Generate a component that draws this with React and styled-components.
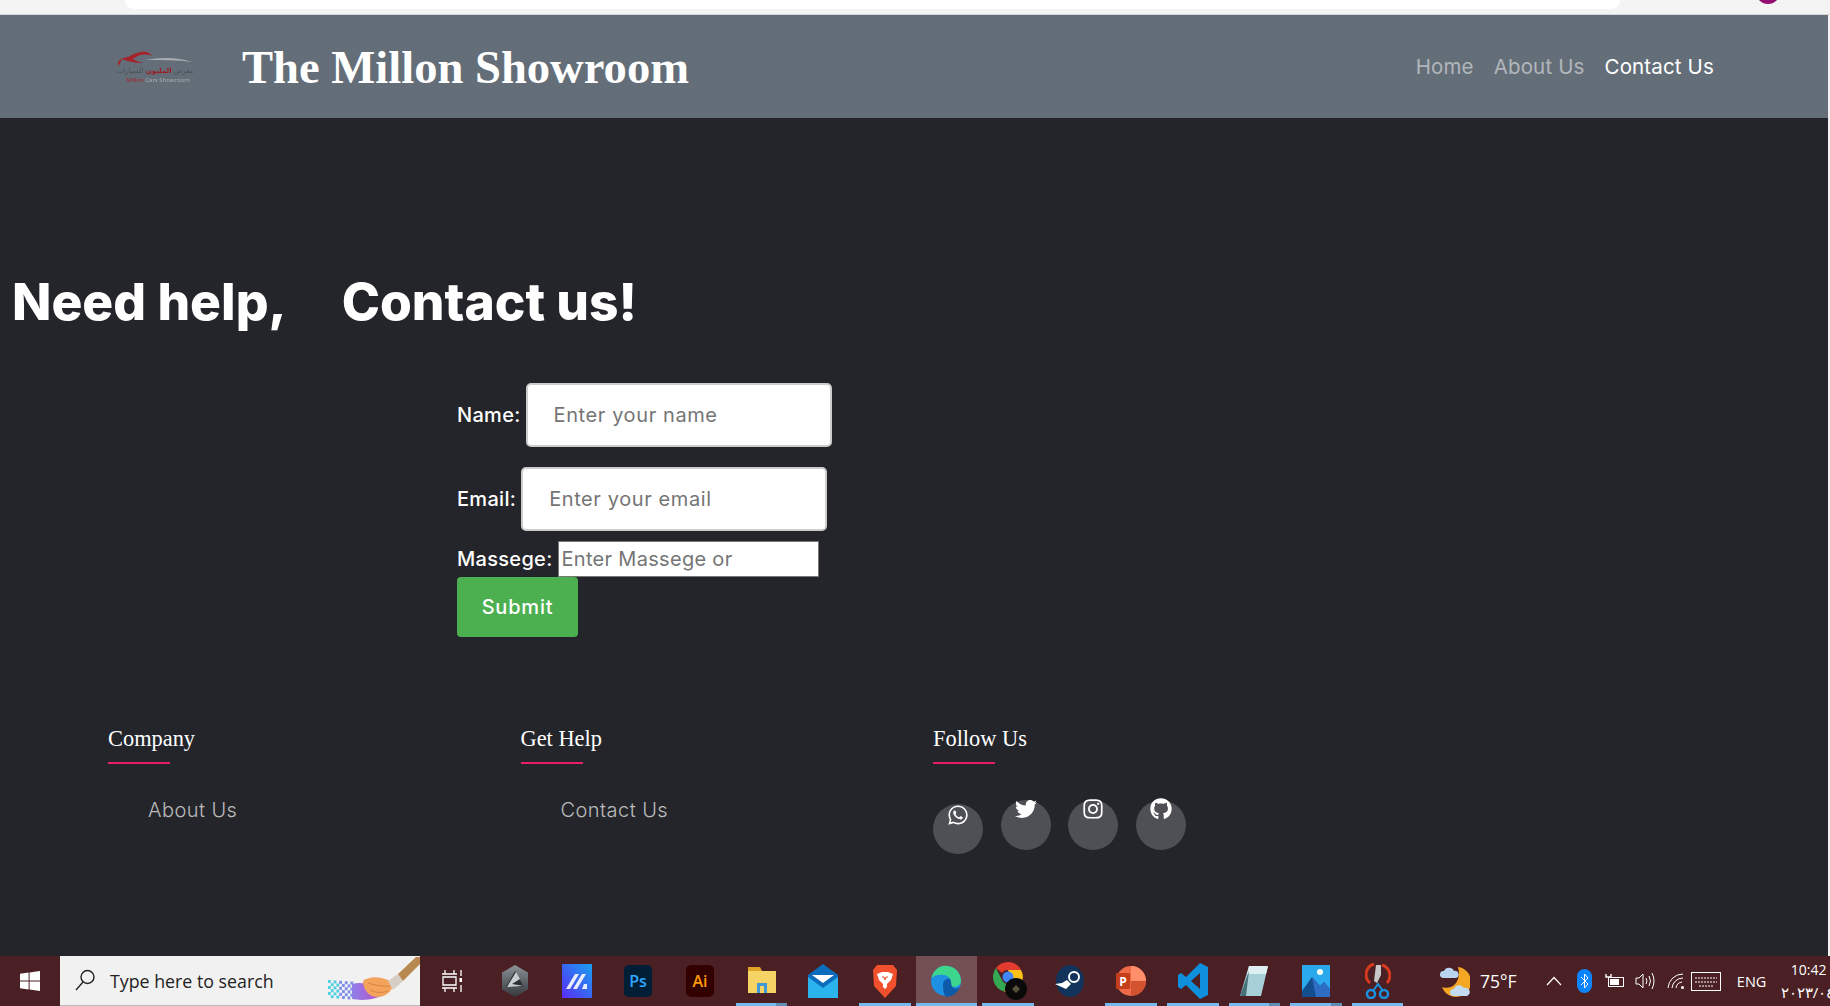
import React from 'react';
import styled, {createGlobalStyle} from 'styled-components';
import {FaWhatsapp, FaTwitter, FaInstagram, FaGithub} from 'react-icons/fa';

const Global = createGlobalStyle`
  * { box-sizing: border-box; }
  html, body { margin: 0; padding: 0; }
  body { font-family: Inter, "Liberation Sans", sans-serif; background: #f3f3f3; overflow: hidden; }
`;

const Page = styled.div`
  width: 1830px;
  height: 1006px;
  display: flex;
  flex-direction: column;
  overflow: hidden;
`;

const BrowserStrip = styled.div`
  height: 15px;
  flex: none;
  display: flex;
  align-items: flex-start;
  padding-left: 125px;
  background: #f4f4f4;
  border-bottom: 1px solid #d8d8d8;
`;
const AddressBar = styled.div`
  width: 1495px;
  height: 9px;
  background: #fff;
  border-radius: 0 0 16px 16px;
`;
const Avatar = styled.div`
  width: 24px;
  height: 24px;
  margin: -20px 0 0 136px;
  border-radius: 50%;
  background: radial-gradient(circle at 50% 80%, #a0107a, #5a0a50);
`;

const Site = styled.div`
  flex: 1;
  min-height: 0;
  display: flex;
  flex-direction: column;
  margin-right: 2px;
  background: #24252b;
`;

const Navbar = styled.header`
  height: 103px;
  flex: none;
  display: flex;
  align-items: center;
  background: #646e78;
  padding: 0 114px 0 116px;
`;
const Logo = styled.svg`
  width: 78px;
  height: 36px;
  flex: none;
  filter: blur(.35px);
`;
const Brand = styled.h1`
  margin: 0 0 0 48px;
  flex: 1;
  font-family: "Liberation Serif", serif;
  font-size: 46.6px;
  font-weight: 700;
  color: #fff;
`;
const NavLinks = styled.nav`
  display: flex;
  gap: 20px;
`;
const NavLink = styled.a`
  font-size: 20.5px;
  letter-spacing: .15px;
  color: ${p => (p.$active ? '#fff' : 'rgba(255,255,255,.5)')};
`;

const Heading = styled.h2`
  margin: 153px 0 0 12px;
  display: flex;
  gap: 55px;
  font-size: 51.5px;
  line-height: 60px;
  font-weight: 800;
  color: #fff;
`;

const Form = styled.form`
  margin: 52px 0 0 457px;
  display: flex;
  flex-direction: column;
  align-items: flex-start;
`;
const Row = styled.div`
  display: flex;
  align-items: center;
  gap: 5px;
  margin-bottom: ${p => p.$gap || 0}px;
`;
const Label = styled.label`
  font-size: 20px;
  letter-spacing: .3px;
  font-weight: 500;
  color: #fff;
`;
const TextInput = styled.input`
  width: 306px;
  height: 64px;
  padding: 0 26px;
  border: 2px solid #ccc;
  border-radius: 5px;
  background: #fff;
  font: 400 20px Inter, sans-serif;
  letter-spacing: .6px;
  outline: none;
  &::placeholder { color: #757575; }
`;
const MessageBox = styled.textarea`
  width: 261px;
  height: 36px;
  padding: 5px 3px;
  border: 1px solid #767676;
  background: #fff;
  font: 400 20px/24px Inter, sans-serif;
  letter-spacing: .3px;
  resize: none;
  overflow: hidden;
  outline: none;
  &::placeholder { color: #757575; }
`;
const Submit = styled.button`
  width: 121px;
  height: 60px;
  border: none;
  border-radius: 4px;
  background: #4caf50;
  color: #fff;
  font: 500 20px Inter, sans-serif;
  letter-spacing: .8px;
`;

const Footer = styled.footer`
  margin: 86px 0 0 108px;
  display: flex;
`;
const FooterCol = styled.div`
  width: 412.5px;
`;
const FooterTitle = styled.h4`
  margin: 0;
  font-family: "Liberation Serif", serif;
  font-size: 22.4px;
  line-height: 32px;
  font-weight: 400;
  color: #fff;
  &::after {
    content: '';
    display: block;
    width: 62px;
    height: 2px;
    margin-top: 7px;
    background: #e91e63;
  }
`;
const FooterLink = styled.a`
  display: block;
  margin: 31px 0 0 40px;
  font-size: 20px;
  line-height: 30px;
  font-weight: 300;
  letter-spacing: .45px;
  color: #bbb;
`;
const Socials = styled.div`
  display: flex;
  gap: 17.5px;
  margin-top: 36px;
  align-items: flex-start;
`;
const Social = styled.a`
  width: 50px;
  height: 50px;
  margin-top: ${p => (p.$low ? 4 : 0)}px;
  display: flex;
  justify-content: center;
  border-radius: 50%;
  background: rgba(255,255,255,.2);
  color: #fff;
  font-size: 22px;
  svg { margin-top: ${p => (p.$low ? 0 : -2)}px; }
`;

const Taskbar = styled.div`
  height: 50px;
  flex: none;
  display: flex;
  align-items: stretch;
  background: #4a2024;
  svg { flex: none; }
`;
const StartButton = styled.div`
  flex: none;
  width: 60px;
  display: flex;
  align-items: center;
  justify-content: center;
`;
const SearchBox = styled.div`
  flex: none;
  width: 360px;
  display: flex;
  align-items: center;
  padding-left: 15px;
  gap: 15px;
  background: #f1f1f1;
  border-bottom: 1px solid #bbb;
  font-family: "Open Sans", sans-serif;
  font-size: 17.8px;
  color: #222;
`;
const SearchText = styled.span`
  flex: 1;
  white-space: nowrap;
`;
const TaskView = styled.div`
  flex: none;
  width: 64.5px;
  display: flex;
  align-items: center;
  justify-content: center;
`;
const AppSlot = styled.div`
  position: relative;
  flex: none;
  width: 61.6px;
  display: flex;
  align-items: center;
  justify-content: center;
  background: ${p => (p.$focused ? '#744f53' : 'transparent')};
  ${p => p.$running && `
    &::after {
      content: '';
      position: absolute;
      bottom: 0;
      left: ${p.$focused ? 0 : 5}px;
      right: ${p.$focused ? 0 : 5}px;
      height: 3px;
      background: ${p.$stacked ? 'linear-gradient(90deg, #76b9ed 78%, #5f8db4 78%)' : '#76b9ed'};
    }
  `}
`;
const Tray = styled.div`
  flex: 1;
  min-width: 0;
  display: flex;
  align-items: center;
  padding-left: 31.5px;
  color: #fff;
  font-family: "Open Sans", sans-serif;
  white-space: nowrap;
  overflow: hidden;
`;
const TrayTemp = styled.span`
  flex: none;
  width: 69px;
  padding-left: 10px;
  font-size: 17.5px;
`;
const TrayIcons = styled.div`
  flex: none;
  display: flex;
  align-items: center;
`;
const TrayIcon = styled.span`
  width: 30.4px;
  display: flex;
  justify-content: center;
`;
const Lang = styled.span`
  flex: none;
  width: 44px;
  margin-left: 15.6px;
  font-size: 14.5px;
`;
const Clock = styled.div`
  flex: none;
  font-size: 14px;
  line-height: 23px;
`;
const ClockTime = styled.div`
  padding-left: 10px;
`;
const ClockDate = styled.div`
  font-size: 15px;
`;

const Win = () => (
    <svg width="20" height="20" viewBox="0 0 20 20" fill="#fff">
        <path d="M0 2.8 8.6 1.5V9.4H0zM9.6 1.4 20 0V9.4H9.6zM0 10.4H8.6V18.4L0 17.2zM9.6 10.4H20V20L9.6 18.6z"/>
    </svg>
);
const SearchGlass = () => (
    <svg width="20" height="24" viewBox="0 0 20 24" fill="none" stroke="#222" strokeWidth="1.4">
        <circle cx="12.5" cy="8" r="6.5"/>
        <path d="M8 13 1 21"/>
    </svg>
);

const stipple = [];
for (let col = 0; col < 9; col++) {
    for (let row = 0; row < 6; row++) {
        if ((col + row) % 2 === 0) {
            stipple.push({x: col * 2.8, y: 23 + row * 3 + col * .2, color: col < 4 ? '#4fd0e0' : '#7d8fe8'});
        }
    }
}

const Brush = () => (
    <svg width="92" height="48" viewBox="0 0 92 48">
        <defs>
            <linearGradient id="brushStroke" x1="0" y1="0" x2="1" y2="0">
                <stop offset="0" stopColor="#8f7fe8"/>
                <stop offset="1" stopColor="#c445c8"/>
            </linearGradient>
        </defs>
        {stipple.map(dot => (
            <rect key={`${dot.x}-${dot.y}`} x={dot.x} y={dot.y} width="2.8" height="3" fill={dot.color}/>
        ))}
        <path d="M24 27C32 25 38 26 44 30L60 35C50 43 34 44 24 42z" fill="url(#brushStroke)"/>
        <path d="M35 24C42 18 54 20 62 24L64 31C60 40 48 42 42 38 38 35 35 30 35 24z" fill="#f4a35c"/>
        <path d="M40 26C46 28 54 30 62 29M42 33C48 36 54 36 60 34" fill="none" stroke="#c97a35" strokeWidth=".7"/>
        <path d="M60 24 70 17 75 24 65 33z" fill="#d8cfc4"/>
        <path d="M70 17 88 0H92V7L75 24z" fill="#b8894f"/>
    </svg>
);
const TaskViewIcon = () => (
    <svg width="20" height="24" viewBox="0 0 20 24" fill="none" stroke="#fff" strokeWidth="1.3">
        <path d="M0 5H15M3 1V5M12 1V5M0 19H15M3 19V23M12 19V23M1 8H14V16H1z"/>
        <path d="M19 1V7M19 16V23"/>
        <rect x="17.500" y="9" width="3" height="4" fill="#fff" stroke="none"/>
    </svg>
);
const AppIcon = ({kind}) => {
    switch (kind) {
        case 'hex':
            return <svg width="28" height="32" viewBox="0 0 28 32">
                <defs><linearGradient id="hexFill" x1="0" y1="0" x2="0" y2="1"><stop offset="0" stopColor="#8b9298"/><stop offset="1" stopColor="#34383c"/></linearGradient></defs>
                <path d="M14 0 27 7.500V24.500L14 32 1 24.500V7.500z" fill="url(#hexFill)"/>
                <path d="M14 6 23 22H5z" fill="#2b2f33"/>
                <path d="M15 7 19 14 11 19 23 21 6 22z" fill="#c8cdd2"/>
            </svg>;
        case 'marvel':
            return <svg width="30" height="34" viewBox="0 0 30 34">
                <defs><linearGradient id="marvelFill" x1="1" y1="0" x2="0" y2="1"><stop offset="0" stopColor="#18a0f0"/><stop offset="1" stopColor="#5a2cf5"/></linearGradient></defs>
                <rect width="30" height="34" fill="url(#marvelFill)"/>
                <path d="M4 25 13 10h4L8 25zM11 25 20 10h4L15 25zM20 25 22 20h3v5z" fill="#e8ecff"/>
            </svg>;
        case 'ps':
        case 'ai': {
            const ps = kind === 'ps';
            return <svg width="28" height="32" viewBox="0 0 28 32">
                <rect width="28" height="32" rx="5" fill={ps ? '#001e36' : '#330000'}/>
                <text x="14" y="22" textAnchor="middle" fontFamily="Open Sans" fontWeight="600" fontSize="16" fill={ps ? '#31a8ff' : '#ff9a00'}>{ps ? 'Ps' : 'Ai'}</text>
            </svg>;
        }
        case 'folder':
            return <svg width="28" height="28" viewBox="0 0 28 28">
                <path d="M0 2H12L14 4H28V26H0z" fill="#f6d365"/>
                <path d="M0 0H12L14 4H0z" fill="#e0a526"/>
                <path d="M9 26V16H19V26H16V19H12V26z" fill="#3e9ad6"/>
            </svg>;
        case 'mail':
            return <svg width="30" height="34" viewBox="0 0 30 34">
                <path d="M15 0 30 11V34H0V11z" fill="#0c6dbd"/>
                <path d="M0 13 15 24 30 13V34H0z" fill="#2bb3ee"/>
                <path d="M4 11H26L15 19z" fill="#fff"/>
            </svg>;
        case 'brave':
            return <svg width="26" height="34" viewBox="0 0 26 34">
                <path d="M5 1H21L25 6 24 22 13 34 2 22 1 6z" fill="#f0502c"/>
                <path d="M5 10 10 8H16L21 10 19 16 15 20V23L13 25 11 23V20L7 16z" fill="#fff"/>
                <path d="M10 13H12L13 16 14 13H16" fill="none" stroke="#f0502c" strokeWidth="1"/>
            </svg>;
        case 'edge':
            return <svg width="32" height="34" viewBox="0 0 32 34">
                <circle cx="16" cy="17" r="15" fill="#1e90e4"/>
                <path d="M2 12C6 2 14 1 18 2 26 3 31 10 31 17 31 22 24 24 20 22 23 18 20 12 14 11 9 10 4 11 2 14z" fill="#3dd68c"/>
                <path d="M13 21C13 16 17 14 20 15 22 18 20 22 24 24 27 25 29 24 30 22 28 29 22 33 16 33 14 31 13 26 13 21z" fill="#0f5aa8"/>
            </svg>;
        case 'chrome':
            return <svg width="38" height="38" viewBox="-4 0 38 38">
                <path d="M15 0A15 15 0 0 1 28 8H15a7 7 0 0 0-6 3L3 6A15 15 0 0 1 15 0z" fill="#e33b2e"/>
                <path d="M3 6 9 18a7 7 0 0 0 6 4l-4 7.500A15 15 0 0 1 3 6z" fill="#35a853"/>
                <path d="M28 8A15 15 0 0 1 11 29.500L19 18 15 8z" fill="#fbc116"/>
                <circle cx="15" cy="15" r="5.500" fill="#4286f5"/>
                <circle cx="23" cy="27" r="11" fill="#0a0a0a"/>
                <path d="M23 23 27 27 23 31 19 27z" fill="#5a5040"/>
            </svg>;
        case 'steam':
            return <svg width="30" height="32" viewBox="0 0 30 32">
                <ellipse cx="15" cy="16" rx="14" ry="16" fill="#12335c"/>
                <circle cx="19" cy="12" r="5" fill="none" stroke="#fff" strokeWidth="2"/>
                <path d="M0 19 11 24 16 19 12 15 7 18z" fill="#fff"/>
            </svg>;
        case 'ppt':
            return <svg width="30" height="32" viewBox="0 0 30 32">
                <circle cx="15" cy="16" r="15" fill="#ed6c47"/>
                <path d="M15 1A15 15 0 0 1 30 16H15z" fill="#ff8f6b"/>
                <path d="M15 16H30A15 15 0 0 1 15 31z" fill="#d35230"/>
                <rect x="0" y="8" width="14" height="16" rx="1" fill="#c43e1c"/>
                <text x="7" y="21" textAnchor="middle" fontFamily="Open Sans" fontWeight="700" fontSize="12" fill="#fff">P</text>
            </svg>;
        case 'vscode':
            return <svg width="30" height="36" viewBox="0 0 30 36">
                <path d="M22 0 30 4V32L22 36 8 22 3 26 0 24V12L3 10 8 14zM22 10 13 18 22 26z" fill="#0e90dc"/>
            </svg>;
        case 'note':
            return <svg width="28" height="32" viewBox="0 0 28 32">
                <path d="M9 1H28L21 31H0z" fill="#a8d0d8"/>
                <path d="M9 1H28L26 9H7z" fill="#dfeef0"/>
                <path d="M0 31 9 6 6 31z" fill="#487078"/>
            </svg>;
        case 'photos':
            return <svg width="28" height="32" viewBox="0 0 28 32">
                <rect width="28" height="32" fill="#2aa9ec"/>
                <circle cx="18" cy="7" r="3" fill="#fff"/>
                <path d="M0 26 10 12 18 21 22 17 28 24V32H0z" fill="#134f8f"/>
                <path d="M10 12 18 21 22 17 28 24V32H14z" fill="#2f6cc4"/>
            </svg>;
        case 'snip':
            return <svg width="26" height="36" viewBox="0 0 26 36">
                <path d="M5 20A11 11 0 0 1 9 1" fill="none" stroke="#d8391f" strokeWidth="3"/>
                <path d="M17 2A11 11 0 0 1 22 20" fill="none" stroke="#d8391f" strokeWidth="3"/>
                <path d="M11 2H16V12L12 20 9 18z" fill="#c8c8c8"/>
                <circle cx="6" cy="31" r="4" fill="none" stroke="#1a90e0" strokeWidth="2.500"/>
                <circle cx="19" cy="31" r="4" fill="none" stroke="#1a90e0" strokeWidth="2.500"/>
                <path d="M8 28 13 21 18 28" fill="none" stroke="#1a90e0" strokeWidth="2"/>
            </svg>;
        default:
            return null;
    }
};
const WeatherIcon = () => (
    <svg width="30" height="31" viewBox="0 0 30 31">
        <path d="M18 1A15 15 0 1 1 2 21C13 25 22 14 18 1z" fill="#f5a623"/>
        <path d="M3 12A3.500 3.500 0 0 1 4 5 5.500 5.500 0 0 1 14 5 3.500 3.500 0 0 1 16 12z" fill="#b8d4ee"/>
        <path d="M13 30A3.500 3.500 0 0 1 14 23 5.500 5.500 0 0 1 24 22 4 4 0 0 1 27 30z" fill="#c4dcf0"/>
    </svg>
);
const Caret = () => (
    <svg width="16" height="10" viewBox="0 0 16 10" fill="none" stroke="#fff" strokeWidth="1.200"><path d="M1 9 8 1.500 15 9"/></svg>
);
const Bluetooth = () => (
    <svg width="15" height="24" viewBox="0 0 15 24">
        <rect width="15" height="24" rx="7.500" fill="#0a84ff"/>
        <path d="M4 8 11 15 7.500 19V5L11 9 4 16" fill="none" stroke="#fff" strokeWidth="1"/>
    </svg>
);
const Battery = () => (
    <svg width="20" height="16" viewBox="0 0 20 16" fill="none" stroke="#fff" strokeWidth="1">
        <rect x="3.500" y="4.500" width="15" height="9"/>
        <rect x="5" y="6" width="9" height="6" fill="#fff" stroke="none"/>
        <path d="M1 1V4H6V1" strokeWidth="1.400"/>
    </svg>
);
const Volume = () => (
    <svg width="20" height="18" viewBox="0 0 20 18" fill="none" stroke="#fff" strokeWidth="1">
        <path d="M1 6H4L8 2V16L4 12H1zM11 6Q13 9 11 12M14 4Q17 9 14 14M17 1Q21 9 17 17"/>
    </svg>
);
const Wifi = () => (
    <svg width="18" height="18" viewBox="0 0 18 18" fill="none" stroke="#fff" strokeWidth="1">
        <path d="M1 16A15 15 0 0 1 16 2M5 16A11 11 0 0 1 16 6M9 16A7 7 0 0 1 15 10"/>
        <circle cx="15.500" cy="15.500" r="1.500" fill="#fff" stroke="none"/>
    </svg>
);
const Keyboard = () => (
    <svg width="30" height="19" viewBox="0 0 30 19" fill="none" stroke="#fff" strokeWidth="1">
        <rect x=".5" y=".5" width="29" height="18"/>
        <path d="M4 6H26M4 10H26M8 14H22" strokeDasharray="2 1"/>
    </svg>
);

const apps = [
    {kind: 'hex'}, {kind: 'marvel'}, {kind: 'ps'}, {kind: 'ai'},
    {kind: 'folder', running: true, stacked: true}, {kind: 'mail'}, {kind: 'brave', running: true},
    {kind: 'edge', running: true, focused: true}, {kind: 'chrome', running: true},
    {kind: 'steam'}, {kind: 'ppt', running: true}, {kind: 'vscode', running: true},
    {kind: 'note', running: true, stacked: true}, {kind: 'photos', running: true, stacked: true}, {kind: 'snip', running: true},
];

const App = () => {
    return (
        <Page>
            <Global/>
            <BrowserStrip>
                <AddressBar/>
                <Avatar/>
            </BrowserStrip>
            <Site>
                <Navbar>
                    <Logo viewBox="0 0 78 36">
                        <path d="M2 17C1 11 5 9 12 8 20 3 27 2 31 3 33 4 35 5 36 7 28 4 22 6 17 10 20 12 24 13 27 14 18 14 11 12 6 10 5 12 4 15 2 17z" fill="#a5242c"/>
                        <path d="M30 11C44 8 62 8 76 13 62 11 46 11 30 11z" fill="#a9adb1"/>
                        <text x="39" y="24" textAnchor="middle" fontFamily="DejaVu Sans" fontSize="7" direction="rtl" fill="#4a4f55">معرض <tspan fontWeight="700" fill="#9c1c24">المليون</tspan> للسيارات</text>
                        <text x="42" y="33" textAnchor="middle" fontFamily="Noto Sans" fontSize="6" fill="#a9adb1"><tspan fill="#a5242c">Millon</tspan> Cars Showroom</text>
                    </Logo>
                    <Brand>The Millon Showroom</Brand>
                    <NavLinks>
                        <NavLink>Home</NavLink>
                        <NavLink>About Us</NavLink>
                        <NavLink $active>Contact Us</NavLink>
                    </NavLinks>
                </Navbar>
                <Heading>
                    <span>Need help,</span>
                    <span>Contact us!</span>
                </Heading>
                <Form onSubmit={(event) => event.preventDefault()}>
                    <Row $gap={20}>
                        <Label>Name:</Label>
                        <TextInput placeholder="Enter your name"/>
                    </Row>
                    <Row $gap={10}>
                        <Label>Email:</Label>
                        <TextInput placeholder="Enter your email"/>
                    </Row>
                    <Row>
                        <Label>Massege:</Label>
                        <MessageBox placeholder="Enter Massege or"/>
                    </Row>
                    <Submit>Submit</Submit>
                </Form>
                <Footer>
                    <FooterCol>
                        <FooterTitle>Company</FooterTitle>
                        <FooterLink>About Us</FooterLink>
                    </FooterCol>
                    <FooterCol>
                        <FooterTitle>Get Help</FooterTitle>
                        <FooterLink>Contact Us</FooterLink>
                    </FooterCol>
                    <FooterCol>
                        <FooterTitle>Follow Us</FooterTitle>
                        <Socials>
                            <Social $low><FaWhatsapp/></Social>
                            <Social><FaTwitter/></Social>
                            <Social><FaInstagram/></Social>
                            <Social><FaGithub/></Social>
                        </Socials>
                    </FooterCol>
                </Footer>
            </Site>
            <Taskbar>
                <StartButton><Win/></StartButton>
                <SearchBox>
                    <SearchGlass/>
                    <SearchText>Type here to search</SearchText>
                    <Brush/>
                </SearchBox>
                <TaskView><TaskViewIcon/></TaskView>
                {apps.map(app => (
                    <AppSlot key={app.kind} $running={app.running} $focused={app.focused} $stacked={app.stacked}>
                        <AppIcon kind={app.kind}/>
                    </AppSlot>
                ))}
                <Tray>
                    <WeatherIcon/>
                    <TrayTemp>75°F</TrayTemp>
                    <TrayIcons>
                        <TrayIcon><Caret/></TrayIcon>
                        <TrayIcon><Bluetooth/></TrayIcon>
                        <TrayIcon><Battery/></TrayIcon>
                        <TrayIcon><Volume/></TrayIcon>
                        <TrayIcon><Wifi/></TrayIcon>
                        <TrayIcon><Keyboard/></TrayIcon>
                    </TrayIcons>
                    <Lang>ENG</Lang>
                    <Clock>
                        <ClockTime>10:42</ClockTime>
                        <ClockDate>٢٠٢٣/٠٤/</ClockDate>
                    </Clock>
                </Tray>
            </Taskbar>
        </Page>
    );
};

export default App;
